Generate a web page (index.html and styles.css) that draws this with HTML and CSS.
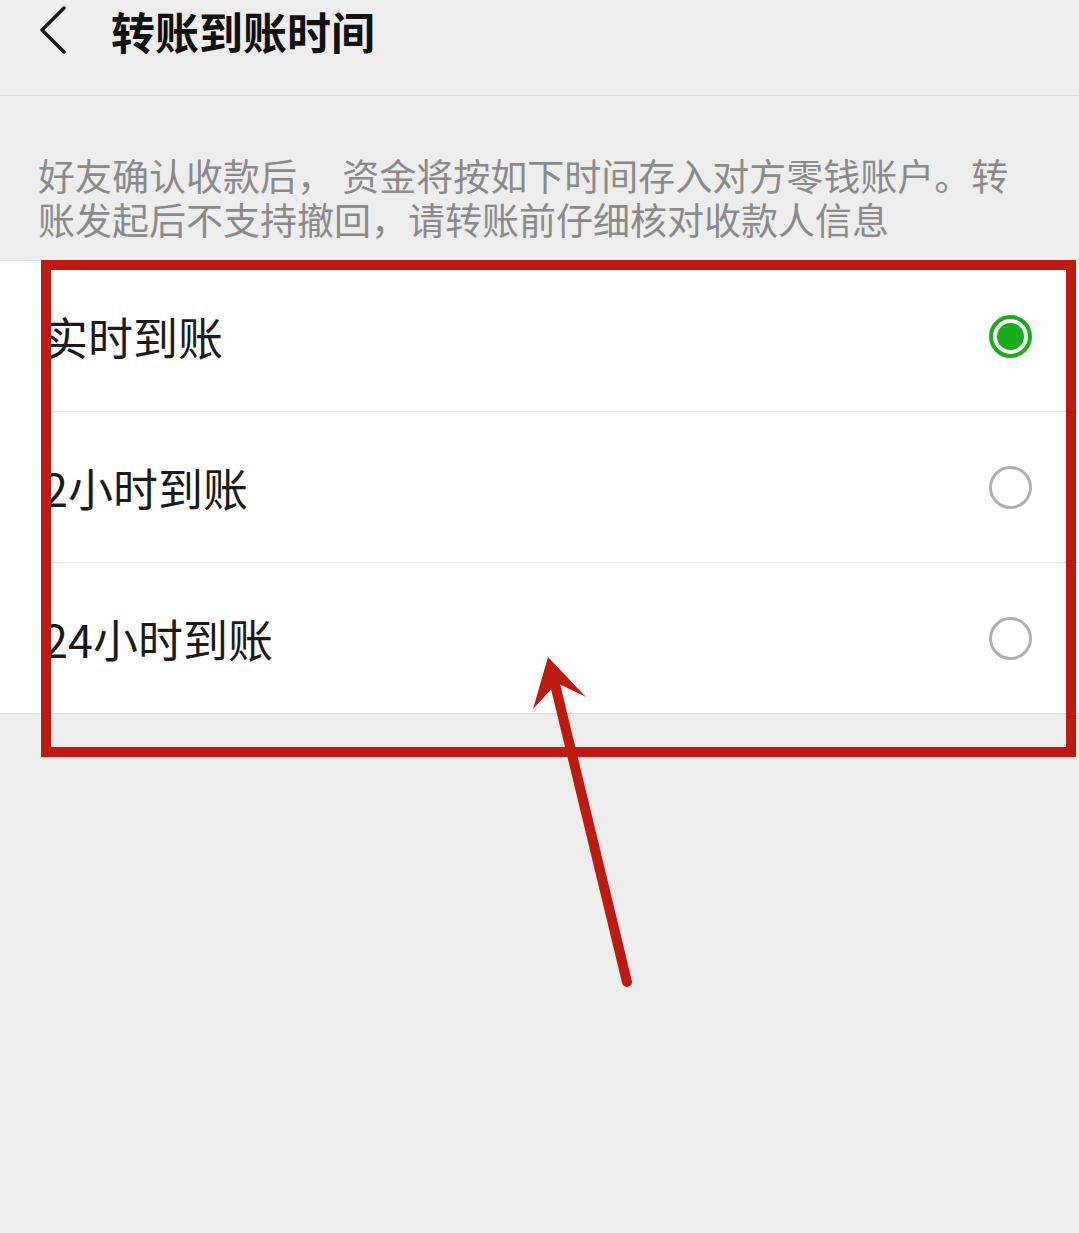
FILE: index.html
```html
<!DOCTYPE html>
<html lang="zh-CN">
<head>
<meta charset="utf-8">
<title>转账到账时间</title>
<link rel="stylesheet" href="styles.css">
</head>
<body>
<div class="page">
  <header class="header">
    <svg class="back" width="30" height="48" viewBox="0 0 30 48"><path d="M26 2 L4 24 L26 46" fill="none" stroke="#1a1a1a" stroke-width="3.5" stroke-linecap="round" stroke-linejoin="round"/></svg>
    <h1 class="title">转账到账时间</h1>
  </header>
  <p class="desc">好友确认收款后， 资金将按如下时间存入对方零钱账户。转账发起后不支持撤回，请转账前仔细核对收款人信息</p>
  <ul class="list">
    <li class="row"><span class="label">实时到账</span><span class="radio checked"></span></li>
    <li class="row"><span class="label">2小时到账</span><span class="radio"></span></li>
    <li class="row"><span class="label">24小时到账</span><span class="radio"></span></li>
  </ul>
  <svg class="annot" width="1079" height="1233" viewBox="0 0 1079 1233">
    <rect x="46" y="265" width="1025" height="487" fill="none" stroke="#bf1a0f" stroke-width="10"/>
    <line x1="627" y1="982" x2="553" y2="676" stroke="#bf1a0f" stroke-width="10" stroke-linecap="round"/>
    <polygon points="548,657 586,697 557,683 533,709" fill="#bf1a0f"/>
  </svg>
</div>
</body>
</html>
```
FILE: styles.css
```css
* { box-sizing: border-box; }
html, body { margin: 0; padding: 0; }
body {
  background: #ededed;
  font-family: "Noto Sans CJK SC", "Noto Sans", sans-serif;
  width: 1079px;
  height: 1233px;
  overflow: hidden;
}
.page { position: relative; width: 1079px; height: 1233px; }
.header {
  height: 96px;
  border-bottom: 1px solid #dadada;
  display: flex;
  align-items: flex-start;
  padding-left: 38px;
}
.back { margin-top: 6px; flex: none; }
.title {
  margin: 0 0 0 43px;
  font-size: 44px;
  font-weight: 700;
  line-height: 62px;
  color: #111;
}
.desc {
  margin: 0;
  padding: 57px 40px 19px 38px;
  font-size: 37px;
  line-height: 44px;
  color: #8a8a8a;
  border-bottom: 1px solid #e0e0e0;
}
.list {
  list-style: none;
  margin: 0;
  padding: 0;
  background: #fff;
  border-bottom: 1px solid #dedede;
}
.row {
  margin-left: 43px;
  height: 151px;
  padding-right: 47px;
  display: flex;
  align-items: center;
  justify-content: space-between;
  border-bottom: 1px solid #e6e6e6;
}
.row:last-child { border-bottom: none; height: 150px; }
.label {
  font-size: 45px;
  color: #1a1a1a;
  line-height: 1;
}
.radio {
  width: 43px;
  height: 43px;
  border-radius: 50%;
  border: 3px solid #b0b0b0;
  flex: none;
}
.radio.checked {
  border: 4px solid #1aad19;
  background: radial-gradient(circle, #1aad19 0 13px, #fff 14px);
}
.annot { position: absolute; left: 0; top: 0; pointer-events: none; }
```
